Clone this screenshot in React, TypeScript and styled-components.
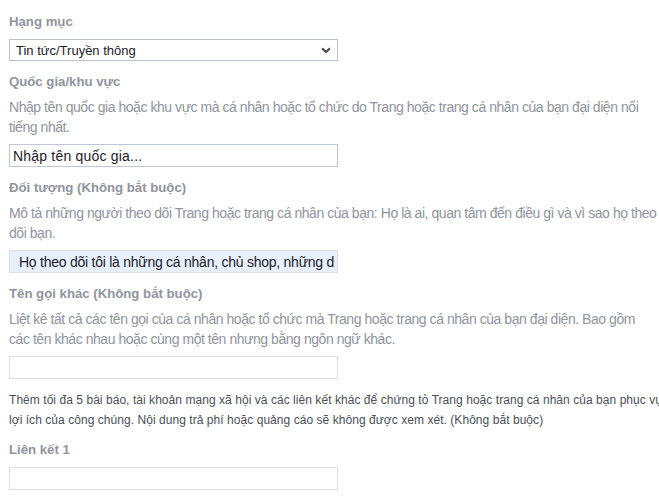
import React from "react";
import styled, { createGlobalStyle } from "styled-components";

const Global = createGlobalStyle`
  html, body { margin: 0; padding: 0; background: #fff; overflow: hidden; }
  body { font-family: "Liberation Sans", Arial, sans-serif; }
`;

const Page = styled.div`
  width: 658px;
  padding: 12px 0 0 9px;
  display: flex;
  flex-direction: column;
`;

const Field = styled.div`
  display: flex;
  flex-direction: column;
  margin-bottom: 11px;
`;

const Label = styled.div<{ $tight?: boolean }>`
  font-size: 13.2px;
  line-height: 20px;
  font-weight: bold;
  color: #90949c;
  margin-bottom: ${(p) => (p.$tight ? "5px" : "7px")};
`;

const Desc = styled.div`
  font-size: 14px;
  letter-spacing: -0.45px;
  line-height: 20px;
  color: #90949c;
  margin-bottom: 7px;
`;

const Note = styled.div`
  font-size: 12px;
  letter-spacing: 0.05px;
  line-height: 20px;
  color: #4b4f56;
  margin-bottom: 10px;
`;

const SelectBox = styled.div`
  box-sizing: border-box;
  width: 329px;
  height: 22px;
  border: 1px solid #bec3c9;
  display: flex;
  align-items: center;
  justify-content: space-between;
  padding: 0 6px 0 6px;
  font-size: 13px;
  color: #1d2129;
`;

const Input = styled.div<{ $variant?: "focus" | "filled" | "empty" }>`
  box-sizing: border-box;
  width: 329px;
  height: 23px;
  border: 1px solid
    ${(p) => (p.$variant === "focus" ? "#bdc7d8" : "#dddfe2")};
  background: ${(p) => (p.$variant === "filled" ? "#e8f0fe" : "#fff")};
  padding: 0 ${(p) => (p.$variant === "filled" ? "9px" : "3px")};
  display: flex;
  align-items: center;
  font-size: 14px;
  letter-spacing: ${(p) => (p.$variant === "filled" ? "-0.25px" : "0.2px")};
  color: #1d2129;
  white-space: nowrap;
  overflow: hidden;
`;

const Chevron = () => (
  <svg width="10" height="7" viewBox="0 0 10 7">
    <path d="M1.2 1.4 L5 5 L8.8 1.4" fill="none" stroke="#4b4f56" strokeWidth="2.2" />
  </svg>
);

export default function App() {
  return (
    <>
      <Global />
      <Page>
        <Field>
          <Label>Hạng mục</Label>
          <SelectBox>
            <span>Tin tức/Truyền thông</span>
            <Chevron />
          </SelectBox>
        </Field>
        <Field>
          <Label $tight>Quốc gia/khu vực</Label>
          <Desc>
            Nhập tên quốc gia hoặc khu vực mà cá nhân hoặc tổ chức do Trang hoặc trang cá nhân của bạn đại diện nổi tiếng nhất.
          </Desc>
          <Input $variant="focus">Nhập tên quốc gia...</Input>
        </Field>
        <Field>
          <Label $tight>Đối tượng (Không bắt buộc)</Label>
          <Desc>
            Mô tả những người theo dõi Trang hoặc trang cá nhân của bạn: Họ là ai, quan tâm đến điều gì và vì sao họ theo dõi bạn.
          </Desc>
          <Input $variant="filled">Họ theo dõi tôi là những cá nhân, chủ shop, những d</Input>
        </Field>
        <Field>
          <Label $tight>Tên gọi khác (Không bắt buộc)</Label>
          <Desc>
            Liệt kê tất cả các tên gọi của cá nhân hoặc tổ chức mà Trang hoặc trang cá nhân của bạn đại diện. Bao gồm
            <br />
            các tên khác nhau hoặc cùng một tên nhưng bằng ngôn ngữ khác.
          </Desc>
          <Input $variant="empty" />
        </Field>
        <Note>
          Thêm tối đa 5 bài báo, tài khoản mạng xã hội và các liên kết khác để chứng tỏ Trang hoặc trang cá nhân của bạn phục vụ lợi ích của công chúng. Nội dung trả phí hoặc quảng cáo sẽ không được xem xét. (Không bắt buộc)
        </Note>
        <Field>
          <Label>Liên kết 1</Label>
          <Input $variant="empty" />
        </Field>
      </Page>
    </>
  );
}
